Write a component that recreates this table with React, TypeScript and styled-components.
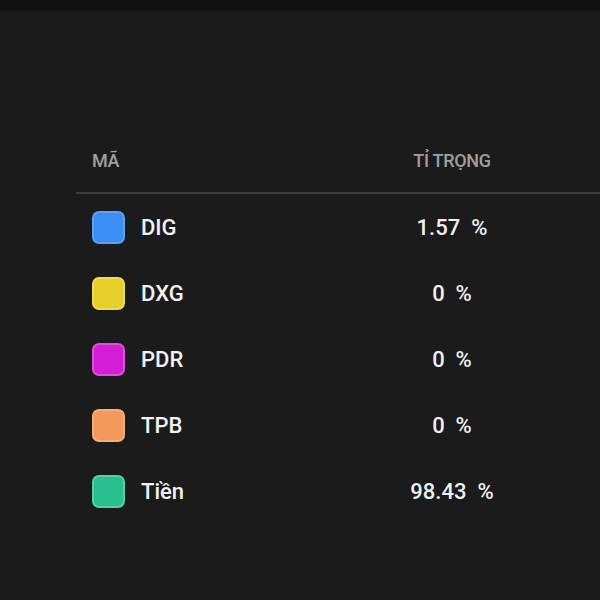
import React from "react";
import styled, { createGlobalStyle } from "styled-components";

const Global = createGlobalStyle`
  html, body { margin: 0; padding: 0; background: #1b1b1b; }
  body { font-family: Roboto, "Noto Sans", "Liberation Sans", sans-serif; }
`;

const Page = styled.div`
  width: 600px;
  height: 600px;
  background: #1b1b1b;
  display: flex;
  flex-direction: column;
  overflow: hidden;
`;

const TopBar = styled.div`
  height: 10px;
  background: #121212;
  box-shadow: 0 1px 3px rgba(0, 0, 0, 0.4);
`;

const Table = styled.div`
  margin: 118px 0 0 76px;
  display: flex;
  flex-direction: column;
`;

const HeaderRow = styled.div`
  display: grid;
  grid-template-columns: 300px 152px;
  align-items: center;
  height: 64px;
  border-bottom: 2px solid #3c3c3c;
`;

const HeadCell = styled.div<{ $center?: boolean }>`
  padding-left: ${(p) => (p.$center ? "0" : "16px")};
  text-align: ${(p) => (p.$center ? "center" : "left")};
  font-size: 18px;
  font-weight: 500;
  color: #a0a0a0;
  text-transform: uppercase;
  letter-spacing: -0.3px;
`;

const Row = styled.div`
  display: grid;
  grid-template-columns: 300px 152px;
  align-items: center;
  height: 66px;
`;

const NameCell = styled.div`
  display: flex;
  align-items: center;
  gap: 16px;
  padding-left: 16px;
`;

const Swatch = styled.div<{ $color: string; $edge: string }>`
  width: 33px;
  height: 33px;
  box-sizing: border-box;
  border-radius: 7px;
  background: ${(p) => p.$color};
  border: 2px solid ${(p) => p.$edge};
`;

const Name = styled.span`
  font-size: 22px;
  font-weight: 500;
  color: #f2f2f2;
`;

const Value = styled.div`
  text-align: center;
  font-size: 22px;
  font-weight: 500;
  color: #f0f0f0;
  white-space: pre;
`;

const rows = [
  { name: "DIG", value: "1.57", color: "#3b8ef2", edge: "#5aa2f6" },
  { name: "DXG", value: "0", color: "#e6cf2a", edge: "#efdc55" },
  { name: "PDR", value: "0", color: "#d41ed6", edge: "#e04ee2" },
  { name: "TPB", value: "0", color: "#f29a5c", edge: "#f5ae7c" },
  { name: "Tiền", value: "98.43", color: "#28c08e", edge: "#55d1a8" },
];

export default function App() {
  return (
    <Page>
      <Global />
      <TopBar />
      <Table>
        <HeaderRow>
          <HeadCell>Mã</HeadCell>
          <HeadCell $center>Tỉ trọng</HeadCell>
        </HeaderRow>
        {rows.map((r) => (
          <Row key={r.name}>
            <NameCell>
              <Swatch $color={r.color} $edge={r.edge} />
              <Name>{r.name}</Name>
            </NameCell>
            <Value>{`${r.value}  %`}</Value>
          </Row>
        ))}
      </Table>
    </Page>
  );
}
